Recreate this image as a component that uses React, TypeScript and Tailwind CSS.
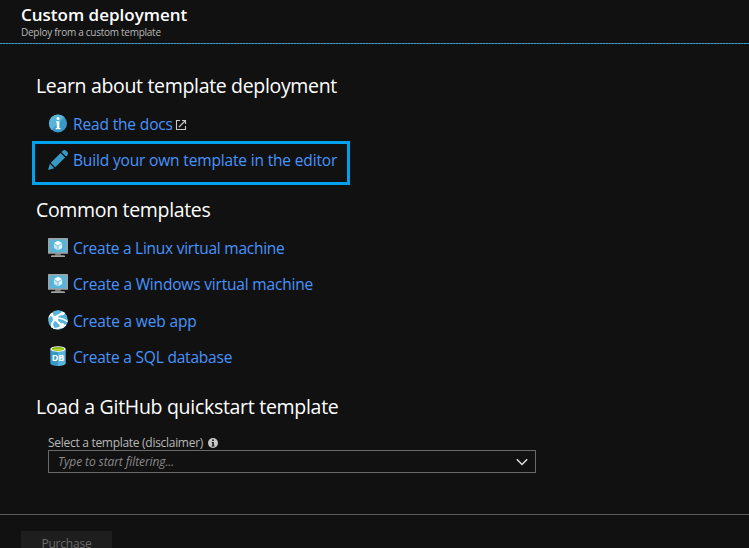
import React from "react";

const InfoIcon = () => (
  <svg className="block h-5 w-5" viewBox="0 0 20 20">
    <circle cx="10" cy="9.5" r="9" fill="#3999c6" />
    <path d="M3.6 15.9A9 9 0 0 1 16.4 3.1Z" fill="#59b4d9" />
    <circle cx="10" cy="4.6" r="1.5" fill="#fff" />
    <path d="M8 7.3h3.4v6.6h1.100v1.300H7.700v-1.300h1.100V8.600H8z" fill="#fff" />
  </svg>
);

const PencilIcon = () => (
  <svg className="block h-5 w-5" viewBox="0 0 20 20">
    <path d="M0 20l1.9-6.3 4.4 4.5z" fill="#3999c6" />
    <path d="M2.7 12.7L12.6 2.9l4.5 4.5-9.9 9.8z" fill="#3999c6" />
    <path d="M13.500 2l1.300-1.300c1-.9 2.300-.8 3.300.1l1.200 1.200c.9 1 .9 2.200 0 3.200L18 6.500z" fill="#3999c6" />
  </svg>
);

const VmIcon = () => (
  <svg className="block h-5 w-5" viewBox="0 0 20 20">
    <path d="M7.200 15h5.600v2.600h-5.600z" fill="#7a7a7a" />
    <path d="M3 18q0-.8 1.500-.8h11q1.500 0 1.500.8v.9H3z" fill="#a0a1a2" />
    <rect x="0" y="0" width="20" height="15.800" rx=".6" fill="#a0a1a2" />
    <rect x="1.500" y="1.500" width="17" height="12.800" fill="#59b4d9" />
    <path d="M10 2.800l4 2.300-4 2.300-4-2.300z" fill="#fff" />
    <path d="M5.900 5.700l3.700 2.200v4.300l-3.700-2.200z" fill="#c5e6f3" />
    <path d="M14.100 5.700l-3.700 2.200v4.300l3.700-2.200z" fill="#e3f3fa" />
  </svg>
);

const WebIcon = () => (
  <svg className="block h-5 w-5" viewBox="0 0 20 20">
    <defs>
      <clipPath id="globe">
        <circle cx="10" cy="10" r="10" />
      </clipPath>
    </defs>
    <g clipPath="url(#globe)">
      <circle cx="10" cy="10" r="10" fill="#59b4d9" />
      <g fill="none" stroke="#fff">
        <path d="M3 3.500Q6 9 14.500 16" strokeWidth="2.200" />
        <path d="M6.800 8.500Q9 5 17 2.500" strokeWidth="2.200" />
        <path d="M7.500 9.500Q3 12 4.300 18" strokeWidth="2" />
        <path d="M9 8Q15 8 20 12" strokeWidth="1.500" />
        <path d="M0 8.500Q1.500 5 4 4.500" strokeWidth="1.500" />
        <path d="M5 18.500Q10 19 14.500 16.500L18 15" strokeWidth="1.500" />
      </g>
      <g fill="#fff">
        <circle cx="7.500" cy="8.500" r="2.700" />
        <circle cx="14" cy="15.500" r="2.500" />
        <circle cx="14.500" cy="3.300" r="1.900" />
        <circle cx="3.700" cy="4.300" r="1.500" />
        <circle cx="4.500" cy="16.800" r="1.500" />
      </g>
    </g>
  </svg>
);

const DbIcon = () => (
  <svg className="block h-5 w-5" viewBox="0 0 20 20">
    <path d="M2.300 3v14.300C2.300 18.800 5.700 20 10 20V3z" fill="#3999c6" />
    <path d="M10 20c4.300 0 7.700-1.200 7.700-2.700V3H10z" fill="#59b4d9" />
    <ellipse cx="10" cy="3" rx="7.700" ry="2.800" fill="#fff" />
    <ellipse cx="10" cy="2.900" rx="6.200" ry="1.900" fill="#7fba00" />
    <ellipse cx="10" cy="3.600" rx="4.600" ry="1.100" fill="#b8d432" />
    <text x="10" y="15.300" textAnchor="middle" fontSize="9" fontWeight="700" fill="#fff" fontFamily="'Open Sans', sans-serif">
      DB
    </text>
  </svg>
);

const ExternalIcon = () => (
  <svg className="block h-3 w-3" viewBox="0 0 12 12" fill="none" stroke="#c8c8c8" strokeWidth="1.100">
    <path d="M5 1.500H1.500v9H10.500V7M7 1.500h3.500V5M10.500 1.500L4 8" />
  </svg>
);

type LinkRowProps = {
  icon: React.ReactNode;
  label: string;
  textClass: string;
  external?: boolean;
};

const LinkRow = ({ icon, label, textClass, external }: LinkRowProps) => (
  <a href="#" className="flex h-5 items-center text-[#4894fe]">
    <span className="w-[25px] shrink-0">{icon}</span>
    <span className={`whitespace-nowrap text-[15.5px] leading-5 ${textClass}`}>{label}</span>
    {external && (
      <span className="ml-[2px] mt-px">
        <ExternalIcon />
      </span>
    )}
  </a>
);

const Heading = ({ children, className }: { children: React.ReactNode; className: string }) => (
  <h2 className={`w-max whitespace-nowrap text-[19.5px] leading-7 text-white ${className}`}>{children}</h2>
);

export default function App() {
  return (
    <div className="flex h-[548px] w-[749px] flex-col overflow-hidden bg-[#111111] font-['Open_Sans',sans-serif]">
      <header className="h-[43px] shrink-0 pl-[21px] pt-1">
        <h1 className="w-max text-[17px] font-semibold leading-[22px] text-white">Custom deployment</h1>
        <p className="-mt-px w-max text-[10px] leading-[14px] tracking-[-0.27px] text-[#b8b8b8]">Deploy from a custom template</p>
      </header>
      <div className="h-px shrink-0 bg-[repeating-linear-gradient(90deg,#1ba8e8_0_2px,#75605c_2px_3px)]" />

      <main className="flex h-[470px] shrink-0 flex-col pl-9">
        <Heading className="mt-7 tracking-[-0.33px]">Learn about template deployment</Heading>
        <div className="ml-3 mt-[14px]">
          <LinkRow icon={<InfoIcon />} label="Read the docs" textClass="tracking-[-0.15px]" external />
        </div>
        <div className="-ml-1 mt-[7px] h-11 w-[318px] border-[3px] border-[#00a2ed] pl-[13px] pt-[6px]">
          <LinkRow icon={<PencilIcon />} label="Build your own template in the editor" textClass="tracking-[-0.16px]" />
        </div>
        <Heading className="mt-[11px] tracking-[-0.33px]">Common templates</Heading>
        <div className="ml-3 mt-[14px] flex flex-col gap-4">
          <LinkRow icon={<VmIcon />} label="Create a Linux virtual machine" textClass="tracking-[-0.25px]" />
          <LinkRow icon={<VmIcon />} label="Create a Windows virtual machine" textClass="tracking-[-0.18px]" />
          <LinkRow icon={<WebIcon />} label="Create a web app" textClass="mt-[2px] tracking-[-0.16px]" />
          <LinkRow icon={<DbIcon />} label="Create a SQL database" textClass="mt-[2px] tracking-[-0.2px]" />
        </div>
        <Heading className="mt-[27px] tracking-[-0.29px]">Load a GitHub quickstart template</Heading>
        <div className="ml-3 mt-[14px] flex h-[15px] items-center text-[12px] leading-4 text-[#b8b8b8]">
          <span className="whitespace-nowrap tracking-[-0.29px]">Select a template (disclaimer)</span>
          <svg className="ml-[5px] mt-px h-[10px] w-[10px]" viewBox="0 0 10 10">
            <circle cx="5" cy="5" r="5" fill="#c8c8c8" />
            <path d="M4.200 1.500h1.600v1.500H4.200zM3.700 4h2.100v3.500h.7v1h-2.800v-1h.6V5h-.6z" fill="#111" />
          </svg>
        </div>
        <div className="ml-3 flex h-[23px] w-[488px] items-center justify-between border border-[#6a6a6a] pl-[9px] pr-[7px]">
          <span className="text-[12px] italic leading-4 tracking-[-0.1px] text-[#8a8a8a]">Type to start filtering...</span>
          <svg className="h-3 w-3" viewBox="0 0 12 12" fill="none" stroke="#e0e0e0" strokeWidth="1.500">
            <path d="M.8 3.300L6 8.500l5.200-5.200" />
          </svg>
        </div>
      </main>

      <footer className="h-[34px] shrink-0 border-t border-[#5c5c5c] pl-[21px] pt-4">
        <button className="flex h-6 w-[91px] justify-center bg-[#1e1e1e] pt-[5px] text-[12px] leading-4 tracking-[-0.2px] text-[#6b6b6b]">Purchase</button>
      </footer>
    </div>
  );
}
